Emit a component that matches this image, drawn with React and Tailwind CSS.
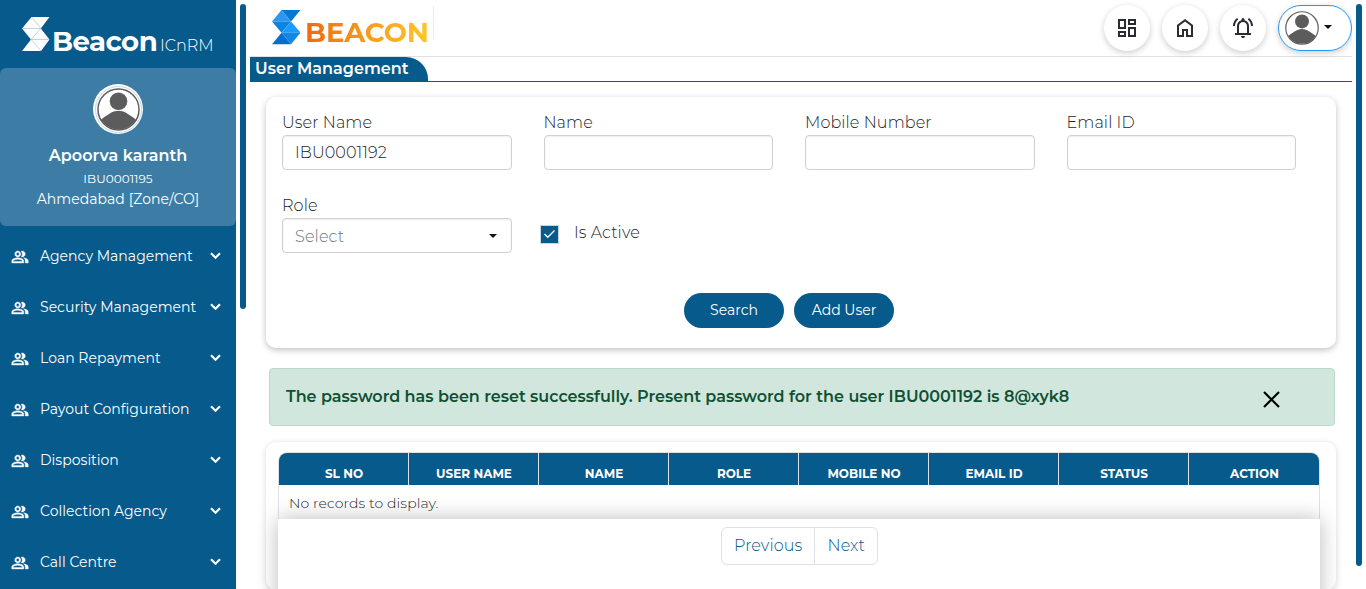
import React from "react";

function SidebarMark() {
  return (
    <svg width="28" height="35" viewBox="0 0 28 35" className="shrink-0">
      <path d="M9.500 0H27.500L18.800 11.500L27.500 22.500L19 34H0L9 22.500L0 11.500Z" fill="#fff" />
      <path d="M0 11.500H19M9 22.500H27M9.500 0L18.800 11.500L9 22.500L19 34" stroke="#b0cade" strokeWidth=".8" fill="none" />
    </svg>
  );
}

function HeaderMark() {
  return (
    <svg width="28" height="35" viewBox="0 0 28 35" className="shrink-0">
      <path d="M9.500 0H28.500L19 11.500Z" fill="#0578d6" />
      <path d="M9.500 0L19 11.500H0Z" fill="#2b97ee" />
      <path d="M0 11.500H19L9.500 22.700Z" fill="#0a84dc" />
      <path d="M19 11.500L28.500 22.700H9.500Z" fill="#1a9bff" />
      <path d="M9.500 22.700H28.500L19 34.300Z" fill="#1288e4" />
      <path d="M9.500 22.700L19 34.300H0Z" fill="#0570d0" />
    </svg>
  );
}

function Avatar({ className }) {
  return (
    <svg viewBox="0 0 44 44" className={className}>
      <defs>
        <clipPath id="face"><circle cx="22" cy="22" r="20.500" /></clipPath>
      </defs>
      <circle cx="22" cy="22" r="21" fill="#fff" stroke="#5c5c5c" strokeWidth="1.500" />
      <g fill="#5c5c5c" clipPath="url(#face)">
        <circle cx="22" cy="13.500" r="9" />
        <path d="M2 33.500C10 28.500 15 23.300 22 23.300S34 28.500 42 33.500V44H2Z" />
      </g>
    </svg>
  );
}

const PATHS = {
  dashboard: "M13 9V3h8v6zM3 13V3h8v10zm10 8V11h8v10zM3 21v-6h8v6zm2-10h4V5H5zm10 8h4v-6h-4zm0-12h4V5h-4zM5 19h4v-2H5z",
  home: "M6 19h3v-6h6v6h3v-9l-6-4.500L6 10zm-2 2V9l8-6l8 6v12h-7v-6h-2v6z",
  bell: "M2 10q0-2.500 1.100-4.588t2.950-3.487l1.175 1.600q-1.475 1.100-2.350 2.788T4 10zm18 0q0-2-.875-3.687t-2.350-2.788l1.175-1.600Q19.800 3.325 20.900 5.413T22 10zM4 19v-2h2v-7q0-2.075 1.250-3.687T10.500 4.200v-.7q0-.625.438-1.062T12 2t1.063.438T13.500 3.500v.7q2 .5 3.250 2.113T18 10v7h2v2zm8 3q-.825 0-1.412-.587T10 20h4q0 .825-.587 1.413T12 22m-4-5h8v-7q0-1.650-1.175-2.825T12 6T9.175 7.175T8 10z",
  people: "M16.670 13.130C18.040 14.060 19 15.320 19 17v3h4v-3c0-2.180-3.570-3.470-6.330-3.870zM15 12c2.210 0 4-1.790 4-4s-1.790-4-4-4c-.47 0-.91.1-1.330.24a5.980 5.980 0 0 1 0 7.520c.42.140.86.240 1.330.240zM9 12c2.210 0 4-1.790 4-4s-1.790-4-4-4-4 1.790-4 4 1.790 4 4 4zm0-6c1.100 0 2 .9 2 2s-.9 2-2 2-2-.9-2-2 .9-2 2-2zM9 13c-2.670 0-8 1.340-8 4v3h16v-3c0-2.660-5.330-4-8-4zm6 5H3v-.990C3.200 16.290 6.300 15 9 15s5.800 1.290 6 2v1z",
};

function Icon({ name, className }) {
  return (
    <svg viewBox="0 0 24 24" fill="currentColor" className={className}>
      <path d={PATHS[name]} />
    </svg>
  );
}

const MENU = [
  "Agency Management",
  "Security Management",
  "Loan Repayment",
  "Payout Configuration",
  "Disposition",
  "Collection Agency",
  "Call Centre",
];

const COLUMNS = ["SL NO", "USER NAME", "NAME", "ROLE", "MOBILE NO", "EMAIL ID", "STATUS", "ACTION"];

function Sidebar() {
  return (
    <aside className="w-[236px] shrink-0 overflow-hidden bg-[#065a8c] text-white">
      <div className="flex h-[68px] pl-[22px] pt-[17px]">
        <SidebarMark />
        <span className="ml-[2px] mt-[6px] w-[106px] text-[27.500px] font-bold leading-[36px] tracking-[-0.500px]">Beacon</span>
        <span className="ml-[2px] mt-[19px] text-[16px] font-light leading-[20px]">ICnRM</span>
      </div>
      <div className="flex h-[158px] flex-col items-center rounded-[6px] bg-[#3d7da5] pt-4">
        <div className="flex size-[50px] items-center justify-center rounded-full bg-white">
          <div className="flex size-[47px] items-center justify-center rounded-full border border-[#c3d6e2]">
            <Avatar className="size-[43px]" />
          </div>
        </div>
        <div className="mt-[10px] text-[16px] font-semibold leading-6 tracking-[0.060px]">Apoorva karanth</div>
        <div className="mt-[2px] text-[12px] leading-[18px] tracking-[0.050px]">IBU0001195</div>
        <div className="text-[14px] leading-[22px] tracking-[0.060px]">Ahmedabad [Zone/CO]</div>
      </div>
      <nav className="pt-[5px]">
        {MENU.map((label) => (
          <div key={label} className="flex h-[51px] items-center pl-[11px] pr-[15px]">
            <Icon name="people" className="size-[18px] shrink-0 stroke-white stroke-[0.500]" />
            <span className="ml-[11px] flex-1 whitespace-nowrap text-[14px] tracking-[0.020px]">{label}</span>
            <svg width="11" height="8" viewBox="0 0 11 8" className="mb-[1px] shrink-0"><path d="M1 1.300L5.500 5.800L10 1.300" stroke="#fff" strokeWidth="2.200" fill="none" /></svg>
          </div>
        ))}
      </nav>
    </aside>
  );
}

function Round({ name }) {
  return (
    <div className="flex size-[46px] items-center justify-center rounded-full bg-white text-[#2b2b33] shadow-[0_2px_6px_rgba(0,0,0,0.2)]">
      <Icon name={name} className="size-6" />
    </div>
  );
}

function Caret({ className }) {
  return (
    <svg width="8" height="4" viewBox="0 0 8 4" className={className}><path d="M0 0H8L4 4Z" fill="#111" /></svg>
  );
}

function Field({ label, value, children }) {
  return (
    <div className="w-[229.500px]">
      <div className="text-[16px] font-light leading-6 tracking-[0.100px]">{label}</div>
      <div className="flex h-[35px] items-center rounded-[4px] border border-[#d0d0d0] px-3 shadow-[inset_0_1px_2px_rgba(0,0,0,0.075)]">
        {value && <span className="text-[16px] font-light tracking-[0.100px]">{value}</span>}
        {children}
      </div>
    </div>
  );
}

export default function App() {
  return (
    <div className="flex h-[589px] w-[1366px] overflow-hidden bg-white font-[Montserrat,Inter,sans-serif] text-[#212529]">
      <Sidebar />
      <div className="ml-1 mt-1 h-[305px] w-[6px] shrink-0 rounded-full bg-[#065a8c]" />
      <main className="ml-1 w-[1102px] shrink-0 overflow-hidden">
        <header className="flex h-[57px] border-b border-[#e0e0e0] pl-[22px]">
          <div className="mt-[6px] flex h-[33px] w-[162px] border-r border-[#ececec] pt-[4px]">
            <HeaderMark />
            <span className="ml-[5px] mt-[4px] h-[36px] whitespace-nowrap bg-gradient-to-r from-[#ee6a10] to-[#ffc629] bg-clip-text text-[27.500px] font-bold leading-[36px] tracking-[-0.150px] text-transparent">BEACON</span>
          </div>
          <div className="ml-auto flex gap-3 pt-[5px]">
            <Round name="dashboard" />
            <Round name="home" />
            <Round name="bell" />
            <div className="flex h-[46px] w-[74px] items-center rounded-full border border-[#2196f3] pl-[6px] shadow-[0_2px_6px_rgba(0,0,0,0.2)]">
              <Avatar className="size-[34px]" />
              <Caret className="mb-[2px] ml-[5px]" />
            </div>
          </div>
        </header>
        <div className="flex h-[25px] border-b border-[#065a8c]">
          <h1 className="w-[178px] whitespace-nowrap rounded-tr-[22px] bg-[#065a8c] pl-[5px] text-[16px] font-semibold leading-6 tracking-[0.020px] text-white">User Management</h1>
        </div>

        <section className="ml-4 mt-[15px] h-[251px] w-[1070px] rounded-[10px] px-4 pt-[14px] shadow-[0_2px_6px_rgba(0,0,0,0.25)]">
          <div className="flex gap-8">
            <Field label="User Name" value="IBU0001192" />
            <Field label="Name" />
            <Field label="Mobile Number" />
            <Field label="Email ID" />
          </div>
          <div className="mt-6 flex">
            <Field label="Role">
              <span className="mt-[2px] text-[16px] font-light tracking-[0.150px] text-[#6c757d]">Select</span>
              <Caret className="ml-auto mr-[2px]" />
            </Field>
            <div className="ml-[28.500px] mt-[30.500px] flex size-[19px] shrink-0 items-center justify-center border border-[#c8d6df] bg-[#065a8c]">
              <svg width="13" height="10" viewBox="0 0 13 10"><path d="M1.500 5L4.800 8.300L11.500 1.500" stroke="#fff" strokeWidth="1.300" fill="none" /></svg>
            </div>
            <span className="ml-[15px] mt-[27px] text-[16px] font-light leading-6 tracking-[0.100px]">Is Active</span>
          </div>
          <div className="ml-[402px] mt-10 flex gap-[10px] text-[14px] text-white">
            <button className="h-[35px] w-[100px] rounded-full bg-[#065a8c]">Search</button>
            <button className="h-[35px] w-[100px] rounded-full bg-[#065a8c]">Add User</button>
          </div>
        </section>

        <div className="ml-[19px] mt-5 flex h-[58px] w-[1066px] items-center justify-between rounded-[4px] border border-[#badbcc] bg-[#d1e7dd] pl-4 pr-[54px] text-[#0f5132]">
          <span className="whitespace-nowrap text-[16px] font-semibold">The password has been reset successfully. Present password for the user IBU0001192 is 8@xyk8</span>
          <svg width="17" height="17" viewBox="0 0 17 17" className="mt-[4px]"><path d="M1 1L16 16M16 1L1 16" stroke="#000" strokeWidth="2.200" /></svg>
        </div>

        <section className="ml-4 mt-4 h-[148px] w-[1070px] rounded-[10px] px-3 pt-[10px] shadow-[0_1px_6px_rgba(0,0,0,0.15)]">
          <div className="h-[67px] w-[1042px] overflow-hidden rounded-t-[9px] border border-b-0 border-[#dee2e6]">
            <div className="grid h-8 grid-cols-8 divide-x divide-[#dee2e6] bg-[#065a8c] text-center text-[12px] font-bold text-white">
              {COLUMNS.map((name) => (
                <div key={name} className="pl-px pt-[11px] leading-[19px]">{name}</div>
              ))}
            </div>
            <div className="pl-[10px] text-[14px] font-light leading-[36px] tracking-[0.120px]">No records to display.</div>
          </div>
          <div className="flex h-[130px] w-[1042px] justify-center bg-white pt-2 shadow-[0_0_20px_rgba(0,0,0,0.27)]">
            <div className="flex h-[38px] w-[157px] rounded-[6px] border border-[#dee2e6] text-[16px] font-light leading-[36px] text-[#065a8c]">
              <div className="w-[93px] border-r border-[#dee2e6] pl-[12.500px] tracking-[0.120px]">Previous</div>
              <div className="pl-[13px] tracking-[0.120px]">Next</div>
            </div>
          </div>
        </section>
      </main>
      <div className="ml-1 mt-1 h-[562px] w-[6px] shrink-0 rounded-full bg-[#065a8c]" />
    </div>
  );
}
